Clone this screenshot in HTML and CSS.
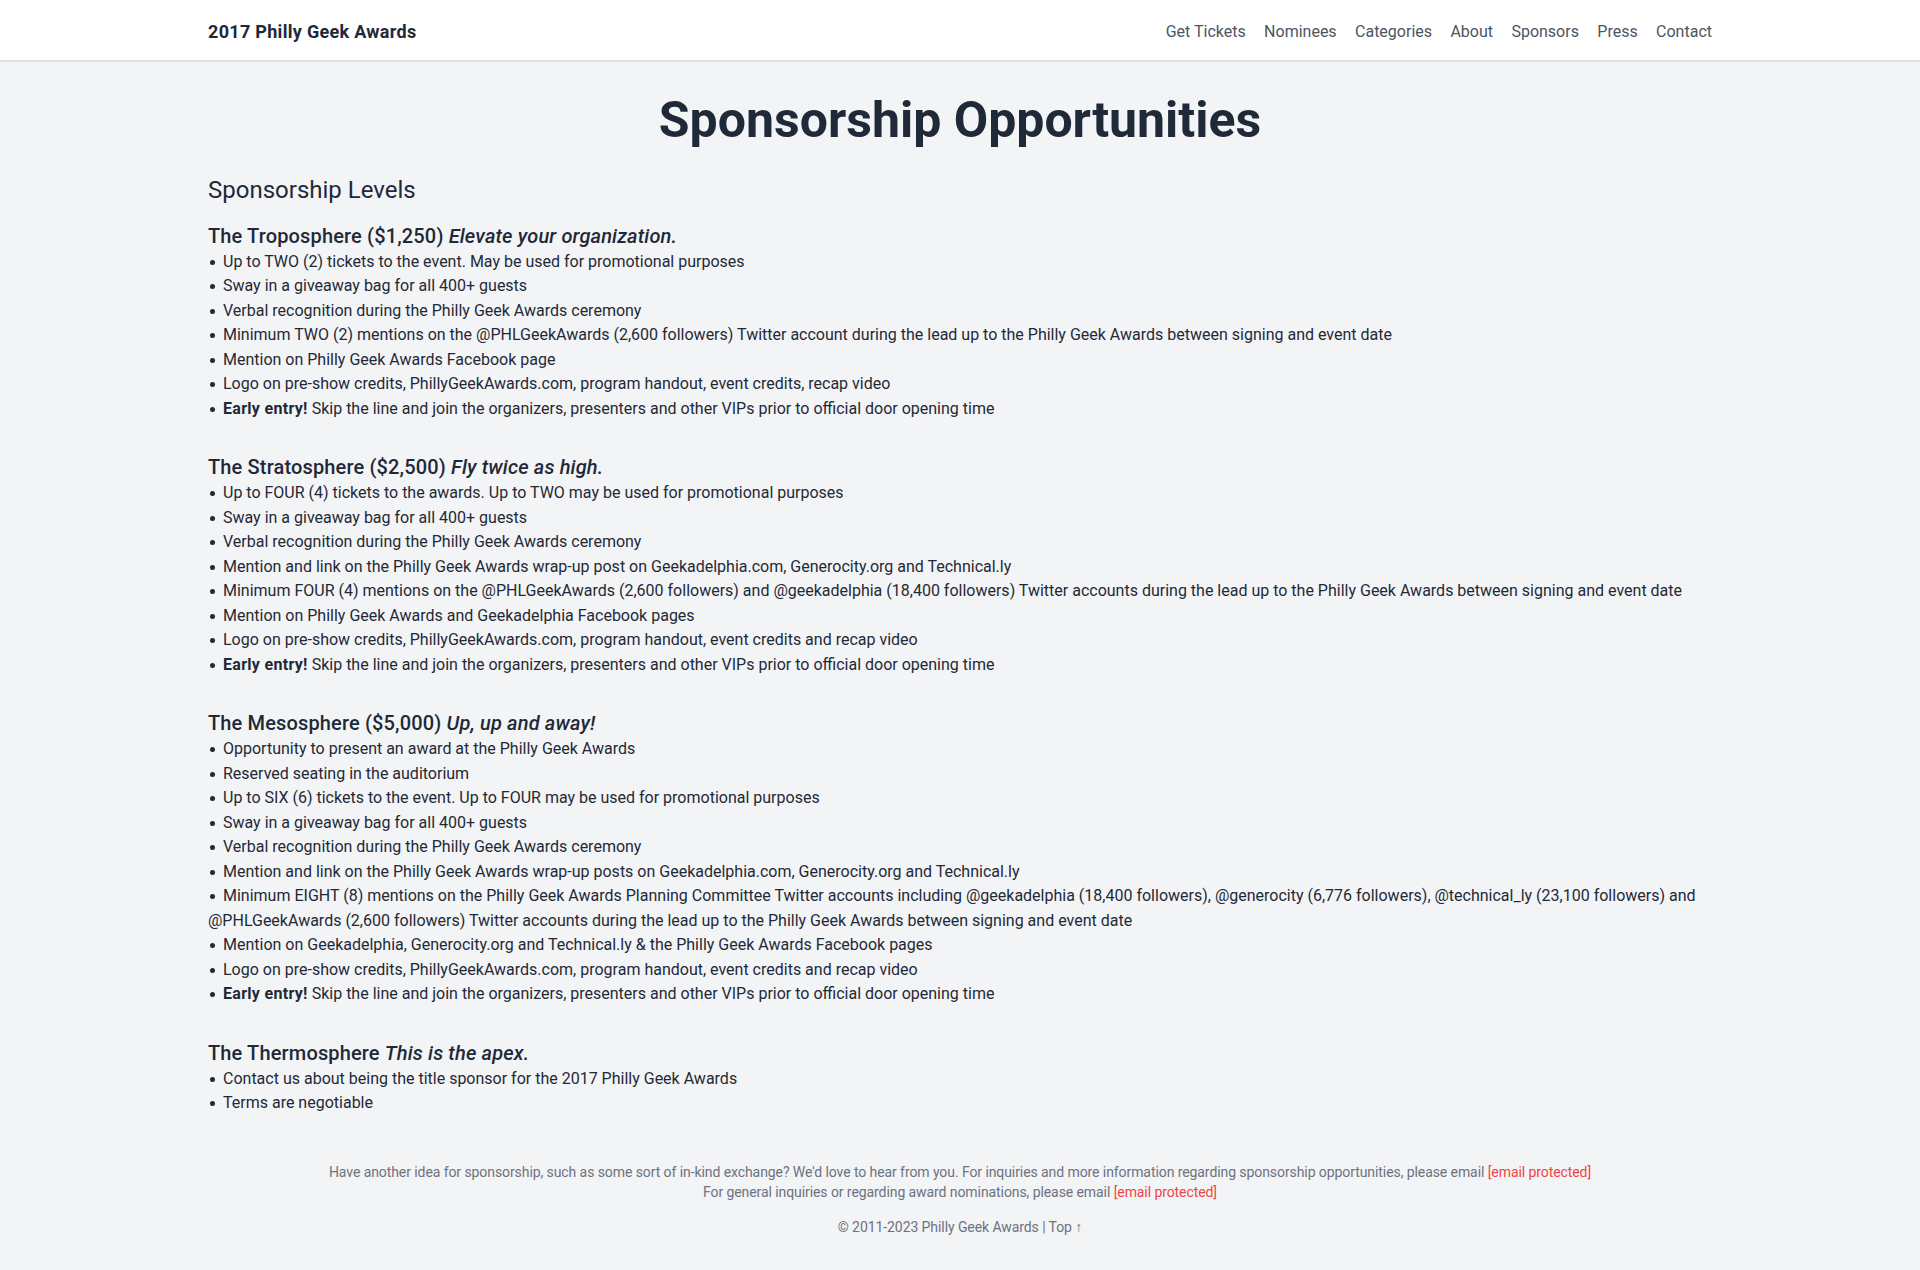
FILE: index.html
```html
<!DOCTYPE html>
<html lang="en">
<head>
<meta charset="utf-8">
<title>Sponsorship Opportunities - 2017 Philly Geek Awards</title>
<link rel="stylesheet" href="styles.css">
</head>
<body>
<header class="site-header">
  <div class="container header-inner">
    <a class="brand" href="#">2017 Philly Geek Awards</a>
    <nav class="nav">
      <a href="#">Get Tickets</a>
      <a href="#">Nominees</a>
      <a href="#">Categories</a>
      <a href="#">About</a>
      <a href="#">Sponsors</a>
      <a href="#">Press</a>
      <a href="#">Contact</a>
    </nav>
  </div>
</header>

<main class="container main">
  <h1 class="page-title">Sponsorship Opportunities</h1>
  <h2 class="levels-title">Sponsorship Levels</h2>

  <section class="level">
    <h3 class="level-title">The Troposphere ($1,250) <em>Elevate your organization.</em></h3>
    <ul class="perks">
      <li>Up to TWO (2) tickets to the event. May be used for promotional purposes</li>
      <li>Sway in a giveaway bag for all 400+ guests</li>
      <li>Verbal recognition during the Philly Geek Awards ceremony</li>
      <li>Minimum TWO (2) mentions on the @PHLGeekAwards (2,600 followers) Twitter account during the lead up to the Philly Geek Awards between signing and event date</li>
      <li>Mention on Philly Geek Awards Facebook page</li>
      <li>Logo on pre-show credits, PhillyGeekAwards.com, program handout, event credits, recap video</li>
      <li><strong>Early entry!</strong> Skip the line and join the organizers, presenters and other VIPs prior to official door opening time</li>
    </ul>
  </section>

  <section class="level">
    <h3 class="level-title">The Stratosphere ($2,500) <em>Fly twice as high.</em></h3>
    <ul class="perks">
      <li>Up to FOUR (4) tickets to the awards. Up to TWO may be used for promotional purposes</li>
      <li>Sway in a giveaway bag for all 400+ guests</li>
      <li>Verbal recognition during the Philly Geek Awards ceremony</li>
      <li>Mention and link on the Philly Geek Awards wrap-up post on Geekadelphia.com, Generocity.org and Technical.ly</li>
      <li>Minimum FOUR (4) mentions on the @PHLGeekAwards (2,600 followers) and @geekadelphia (18,400 followers) Twitter accounts during the lead up to the Philly Geek Awards between signing and event date</li>
      <li>Mention on Philly Geek Awards and Geekadelphia Facebook pages</li>
      <li>Logo on pre-show credits, PhillyGeekAwards.com, program handout, event credits and recap video</li>
      <li><strong>Early entry!</strong> Skip the line and join the organizers, presenters and other VIPs prior to official door opening time</li>
    </ul>
  </section>

  <section class="level">
    <h3 class="level-title">The Mesosphere ($5,000) <em>Up, up and away!</em></h3>
    <ul class="perks">
      <li>Opportunity to present an award at the Philly Geek Awards</li>
      <li>Reserved seating in the auditorium</li>
      <li>Up to SIX (6) tickets to the event. Up to FOUR may be used for promotional purposes</li>
      <li>Sway in a giveaway bag for all 400+ guests</li>
      <li>Verbal recognition during the Philly Geek Awards ceremony</li>
      <li>Mention and link on the Philly Geek Awards wrap-up posts on Geekadelphia.com, Generocity.org and Technical.ly</li>
      <li>Minimum EIGHT (8) mentions on the Philly Geek Awards Planning Committee Twitter accounts including @geekadelphia (18,400 followers), @generocity (6,776 followers), @technical_ly (23,100 followers) and @PHLGeekAwards (2,600 followers) Twitter accounts during the lead up to the Philly Geek Awards between signing and event date</li>
      <li>Mention on Geekadelphia, Generocity.org and Technical.ly &amp; the Philly Geek Awards Facebook pages</li>
      <li>Logo on pre-show credits, PhillyGeekAwards.com, program handout, event credits and recap video</li>
      <li><strong>Early entry!</strong> Skip the line and join the organizers, presenters and other VIPs prior to official door opening time</li>
    </ul>
  </section>

  <section class="level">
    <h3 class="level-title">The Thermosphere <em>This is the apex.</em></h3>
    <ul class="perks">
      <li>Contact us about being the title sponsor for the 2017 Philly Geek Awards</li>
      <li>Terms are negotiable</li>
    </ul>
  </section>
</main>

<footer class="site-footer">
  <p class="footer-note">Have another idea for sponsorship, such as some sort of in-kind exchange? We'd love to hear from you. For inquiries and more information regarding sponsorship opportunities, please email <a href="#">[email&#160;protected]</a></p>
  <p class="footer-note">For general inquiries or regarding award nominations, please email <a href="#">[email&#160;protected]</a></p>
  <p class="copyright">© 2011-2023 Philly Geek Awards | <a href="#">Top ↑</a></p>
</footer>
</body>
</html>
```
FILE: styles.css
```css
* { box-sizing: border-box; }

html, body {
  margin: 0;
  padding: 0;
}

body {
  background: #f3f4f6;
  color: #1f2937;
  font-family: Roboto, "Liberation Sans", Arial, sans-serif;
  font-size: 16px;
  line-height: 24.5px;
  min-height: 1270px;
}

a { text-decoration: none; color: inherit; }

.container {
  max-width: 1536px;
  margin: 0 auto;
  padding: 0 16px;
}

/* Header */
.site-header {
  background: #ffffff;
  height: 60px;
  box-shadow: 0 1px 3px rgba(0, 0, 0, 0.1), 0 1px 2px rgba(0, 0, 0, 0.06);
  position: relative;
  z-index: 1;
}

.header-inner {
  height: 60px;
  display: flex;
  align-items: center;
  justify-content: space-between;
}

.brand {
  font-size: 18px;
  font-weight: 700;
  letter-spacing: 0.3px;
  color: #1f2937;
  line-height: 24px;
  margin-top: 3px;
}

.nav {
  display: flex;
  gap: 18.4px;
  margin-top: 3px;
}

.nav a {
  color: #4b5563;
  font-size: 16px;
  line-height: 24px;
}

/* Main */
.main {
  padding-top: 30px;
}

.page-title {
  margin: 0;
  text-align: center;
  font-size: 50px;
  line-height: 60px;
  font-weight: 700;
  color: #1f2937;
}

.levels-title {
  margin: 24px 0 0;
  font-size: 24px;
  line-height: 32px;
  font-weight: 400;
  color: #1f2937;
}

.level {
  margin-top: 33px;
}

.levels-title + .level {
  margin-top: 16.5px;
}

.level-title {
  margin: 0;
  font-size: 20px;
  line-height: 27px;
  font-weight: 500;
  letter-spacing: 0.15px;
  color: #1f2937;
}

.level-title em {
  font-style: italic;
  font-weight: 500;
}

.perks {
  list-style: none;
  margin: 0;
  padding: 0;
}

.perks li {
  line-height: 24.5px;
}

.perks li::before {
  content: "";
  display: inline-block;
  width: 5px;
  height: 5px;
  border-radius: 50%;
  background: #1f2937;
  margin-left: 2px;
  margin-right: 8px;
  vertical-align: 2px;
}

.perks strong {
  font-weight: 700;
  letter-spacing: 0.3px;
}

/* Footer */
.site-footer {
  padding: 46px 16px 32px;
  text-align: center;
  color: #6b7280;
  font-size: 14px;
  line-height: 20px;
  letter-spacing: -0.08px;
}

.footer-note {
  margin: 0;
}

.footer-note a {
  color: #ef4444;
}

.copyright {
  margin: 15.5px 0 0;
}

.copyright a {
  color: #6b7280;
}
```
